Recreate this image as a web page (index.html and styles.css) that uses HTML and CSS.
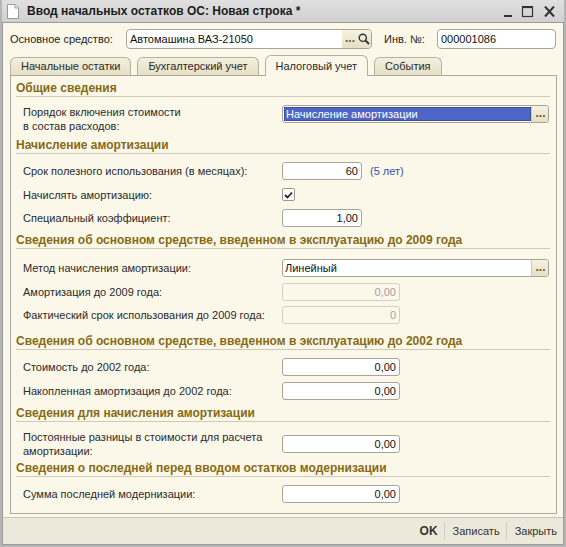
FILE: index.html
```html
<!DOCTYPE html>
<html lang="ru">
<head>
<meta charset="utf-8">
<title>Ввод начальных остатков ОС</title>
<link rel="stylesheet" href="styles.css">
</head>
<body>
<div class="window">
  <div class="titlebar">
    <svg class="doc-icon" width="12" height="15" viewBox="0 0 12 15">
      <path d="M0.5 0.5 H8 L11.5 4 V14.5 H0.5 Z" fill="#ffffff" stroke="#9a9a9a"/>
      <path d="M8 0.5 V4 H11.5" fill="#e8e8e8" stroke="#9a9a9a"/>
    </svg>
    <span class="title">Ввод начальных остатков ОС: Новая строка *</span>
    <svg class="win-btns" width="54" height="12" viewBox="0 0 54 12">
      <rect x="0" y="9" width="8" height="2" fill="#333"/>
      <rect x="18.5" y="0.5" width="10" height="10" fill="none" stroke="#333" stroke-width="1.2"/>
      <rect x="18.5" y="0.5" width="10" height="1.6" fill="#333"/>
      <path d="M41 0.5 L50 10.5 M50 0.5 L41 10.5" stroke="#333" stroke-width="2"/>
    </svg>
  </div>
  <div class="frame">
    <div class="content">
      <div class="toprow">
        <span class="lbl-main">Основное средство:</span>
        <div class="inp field-main">
          <span class="val">Автомашина ВАЗ-21050</span>
          <span class="dots">...</span>
          <span class="search-btn">
            <svg width="12" height="12" viewBox="0 0 12 12"><circle cx="4.8" cy="4.8" r="3.6" fill="none" stroke="#333" stroke-width="1.4"/><path d="M7.5 7.5 L11 11" stroke="#333" stroke-width="1.8"/></svg>
          </span>
        </div>
        <span class="lbl-inv">Инв. №:</span>
        <div class="inp field-inv"><span class="val">000001086</span></div>
      </div>

      <div class="tabs">
        <div class="tab">Начальные остатки</div>
        <div class="tab">Бухгалтерский учет</div>
        <div class="tab active">Налоговый учет</div>
        <div class="tab">События</div>
      </div>

      <div class="panel">
        <div class="section">
          <div class="sec-title">Общие сведения</div>
          <div class="rows s1">
            <div class="row top">
              <div class="lbl">Порядок включения стоимости<br>в состав расходов:</div>
              <div class="inp wide pick"><span class="val sel">Начисление амортизации</span><span class="dots">...</span></div>
            </div>
          </div>
        </div>

        <div class="section">
          <div class="sec-title">Начисление амортизации</div>
          <div class="rows">
            <div class="row">
              <div class="lbl">Срок полезного использования (в месяцах):</div>
              <div class="field-line"><div class="inp short num">60</div><span class="hint">(5 лет)</span></div>
            </div>
            <div class="row">
              <div class="lbl">Начислять амортизацию:</div>
              <div class="check"><svg width="9" height="8" viewBox="0 0 9 8"><path d="M1 4 L3.5 6.5 L8 1.5" fill="none" stroke="#222" stroke-width="1.8"/></svg></div>
            </div>
            <div class="row">
              <div class="lbl">Специальный коэффициент:</div>
              <div class="inp short num">1,00</div>
            </div>
          </div>
        </div>

        <div class="section">
          <div class="sec-title">Сведения об основном средстве, введенном в эксплуатацию до 2009 года</div>
          <div class="rows s3">
            <div class="row">
              <div class="lbl">Метод начисления амортизации:</div>
              <div class="inp wide pick"><span class="val">Линейный</span><span class="dots">...</span></div>
            </div>
            <div class="row">
              <div class="lbl">Амортизация до 2009 года:</div>
              <div class="inp mid num disabled">0,00</div>
            </div>
            <div class="row">
              <div class="lbl">Фактический срок использования до 2009 года:</div>
              <div class="inp mid num disabled">0</div>
            </div>
          </div>
        </div>

        <div class="section">
          <div class="sec-title">Сведения об основном средстве, введенном в эксплуатацию до 2002 года</div>
          <div class="rows">
            <div class="row">
              <div class="lbl">Стоимость до 2002 года:</div>
              <div class="inp mid num">0,00</div>
            </div>
            <div class="row">
              <div class="lbl">Накопленная амортизация до 2002 года:</div>
              <div class="inp mid num">0,00</div>
            </div>
          </div>
        </div>

        <div class="section">
          <div class="sec-title">Сведения для начисления амортизации</div>
          <div class="rows s5">
            <div class="row">
              <div class="lbl">Постоянные разницы в стоимости для расчета<br>амортизации:</div>
              <div class="inp mid num">0,00</div>
            </div>
          </div>
        </div>

        <div class="section">
          <div class="sec-title">Сведения о последней перед вводом остатков модернизации</div>
          <div class="rows">
            <div class="row">
              <div class="lbl">Сумма последней модернизации:</div>
              <div class="inp mid num">0,00</div>
            </div>
          </div>
        </div>
      </div>
    </div>

    <div class="footer">
      <span class="fbtn ok">OK</span>
      <span class="fbtn">Записать</span>
      <span class="fbtn">Закрыть</span>
    </div>
  </div>
</div>
</body>
</html>
```

FILE: styles.css
```css
* {
  box-sizing: border-box;
}

html,
body {
  margin: 0;
  padding: 0;
  background: #ffffff;
}

body {
  font-family: "Liberation Sans", Arial, sans-serif;
  font-size: 11px;
  color: #222222;
}

.window {
  width: 566px;
  height: 547px;
  display: flex;
  flex-direction: column;
  background: #c9c9c9;
  border: 2px solid #b5b5b5;
  border-top: 0;
}

.titlebar {
  height: 22px;
  flex: none;
  display: flex;
  align-items: center;
  padding-left: 5px;
  background: linear-gradient(#e0e0e0, #d0d0d0);
}

.doc-icon {
  margin-right: 8px;
}

.title {
  font-weight: bold;
  font-size: 12px;
  color: #1c1c1c;
  flex: 1;
}

.win-btns {
  margin-right: 6px;
  margin-top: 2px;
}

.frame {
  flex: 1;
  min-height: 0;
  display: flex;
  flex-direction: column;
  background: #fbf8ea;
  border: 1px solid #9b9b9b;
}

.content {
  flex: 1;
  min-height: 0;
  display: flex;
  flex-direction: column;
  padding: 6px 6px 3px 7px;
}

/* top row */
.toprow {
  display: flex;
  align-items: center;
  height: 20px;
  flex: none;
}

.lbl-main {
  width: 116px;
}

.lbl-inv {
  width: 53px;
  margin-left: 12px;
}

.inp {
  height: 18px;
  border: 1px solid #a8a596;
  border-radius: 3px;
  background: #ffffff;
  padding: 0 3px;
  line-height: 16px;
  white-space: nowrap;
  color: #111111;
}

.toprow .inp {
  height: 20px;
  line-height: 18px;
  border-radius: 4px;
}

.field-main {
  width: 246px;
  display: flex;
  padding: 0 0 0 3px;
  overflow: hidden;
}

.field-main .val {
  flex: 1;
}

.field-inv {
  width: 119px;
}

.dots {
  width: 15px;
  text-align: center;
  color: #6f5a12;
  font-size: 12px;
  font-weight: bold;
  letter-spacing: 0;
  background: linear-gradient(#f6f2e2, #e6dfc6);
  line-height: 17px;
  padding-left: 1px;
}

.search-btn {
  width: 14px;
  display: flex;
  align-items: center;
  justify-content: center;
  background: linear-gradient(#f6f2e2, #e6dfc6);
}

/* tabs */
.tabs {
  display: flex;
  align-items: flex-end;
  gap: 6px;
  height: 20px;
  margin-top: 6px;
  flex: none;
}

.tab {
  height: 18px;
  line-height: 17px;
  padding: 0 10px;
  border: 1px solid #b6b19d;
  border-bottom: 0;
  border-radius: 6px 6px 0 0;
  background: linear-gradient(#f4f0de, #e5dfc5);
  color: #2a2a2a;
}

.tab.active {
  height: 21px;
  line-height: 20px;
  margin-bottom: -1px;
  background: #fbf8ea;
  position: relative;
  z-index: 1;
}

/* panel */
.panel {
  flex: 1;
  min-height: 0;
  overflow: hidden;
  border: 1px solid #a9a9a4;
  background: #fbf8ea;
  padding: 5px 6px 0 5px;
}

.sec-title {
  font-weight: bold;
  font-size: 12px;
  color: #876a14;
  line-height: 14px;
  padding-bottom: 1px;
  border-bottom: 1px solid #cdc9b4;
}

.rows {
  display: flex;
  flex-direction: column;
  gap: 5.5px;
  padding: 8px 0 6px;
}

.rows.s1 {
  padding-bottom: 5px;
}

.rows.s3 {
  padding-top: 10px;
  padding-bottom: 10px;
}

.rows.s5 {
  padding-bottom: 3px;
}

.row {
  display: grid;
  grid-template-columns: 259px auto;
  align-items: center;
  min-height: 18px;
  padding-left: 7px;
}

.row.top {
  align-items: start;
}

.lbl {
  line-height: 14px;
  color: #2a2a2a;
  white-space: nowrap;
}

.wide {
  width: 267px;
}

.short {
  width: 80px;
}

.mid {
  width: 118px;
}

.num {
  text-align: right;
}

.pick {
  display: flex;
  padding: 0;
  overflow: hidden;
}

.pick .val {
  flex: 1;
  padding-left: 2px;
}

.pick .dots {
  width: 17px;
  line-height: 15px;
  border-left: 1px solid #cfc9b2;
}

.val.sel {
  background: #4e65c6;
  color: #ffffff;
  margin: 1px 0 1px 1px;
  line-height: 14px;
  outline: 1px dotted #2b3c80;
  outline-offset: -1px;
}

.disabled {
  background: transparent;
  border-color: #d3d0c0;
  color: #9f9f9f;
}

.field-line {
  display: flex;
  align-items: center;
}

.hint {
  margin-left: 8px;
  color: #3452b4;
}

.check {
  width: 13px;
  height: 13px;
  border: 1px solid #9d9a8a;
  border-radius: 2px;
  background: #ffffff;
  display: flex;
  align-items: center;
  justify-content: center;
}

/* footer */
.footer {
  height: 27px;
  flex: none;
  display: flex;
  align-items: center;
  justify-content: flex-end;
  border-top: 1px solid #c9c5b3;
  background: #ece9da;
  padding-right: 0;
}

.fbtn {
  padding: 0 6px 0 8px;
  color: #333333;
  line-height: 18px;
  border-left: 1px solid #d2cebd;
}

.fbtn.ok {
  font-weight: bold;
  font-size: 12px;
  border-left: 0;
  padding-right: 6px;
}
```
